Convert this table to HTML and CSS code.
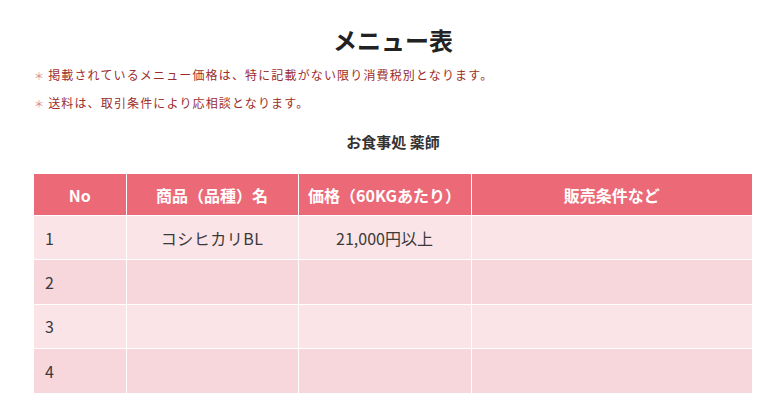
FILE: index.html
```html
<!DOCTYPE html>
<html lang="ja">
<head>
<meta charset="utf-8">
<link rel="stylesheet" href="styles.css">
</head>
<body>
<div class="wrap">
  <h1 class="title">メニュー表</h1>
  <p class="note"><span class="mark">＊</span>掲載されているメニュー価格は、特に記載がない限り消費税別となります。</p>
  <p class="note"><span class="mark">＊</span>送料は、取引条件により応相談となります。</p>
  <h2 class="shop">お食事処 薬師</h2>
  <table class="menu">
    <colgroup>
      <col class="c1"><col class="c2"><col class="c3"><col class="c4">
    </colgroup>
    <thead>
      <tr><th>No</th><th>商品（品種）名</th><th>価格（60KGあたり）</th><th>販売条件など</th></tr>
    </thead>
    <tbody>
      <tr><td class="no">1</td><td class="wide">コシヒカリBL</td><td>21,000円以上</td><td></td></tr>
      <tr><td class="no">2</td><td></td><td></td><td></td></tr>
      <tr><td class="no">3</td><td></td><td></td><td></td></tr>
      <tr><td class="no">4</td><td></td><td></td><td></td></tr>
    </tbody>
  </table>
</div>
</body>
</html>
```
FILE: styles.css
```css
html, body {
  margin: 0;
  padding: 0;
  background: #fff;
}
body {
  font-family: "Noto Sans CJK JP", "Noto Sans", sans-serif;
  color: #333;
}
.wrap {
  width: 718px;
  margin: 0 0 0 34px;
  padding-top: 22px;
}
.title {
  margin: 0;
  text-align: center;
  font-size: 24px;
  font-weight: 700;
  line-height: 36px;
  color: #222;
}
.note {
  margin: 0;
  font-size: 12px;
  line-height: 27px;
  color: #9b2d2d;
  letter-spacing: 1.15px;
}
.note:first-of-type {
  margin-top: 3px;
}
.mark {
  color: #d58a8a;
  font-size: 10px;
  margin-right: 3px;
}
.shop {
  margin: 13px 0 0;
  text-align: center;
  font-size: 15px;
  font-weight: 700;
  line-height: 24px;
  color: #333;
}
.menu {
  margin-top: 20px;
  width: 718px;
  border-collapse: collapse;
  table-layout: fixed;
}
.c1 { width: 92px; }
.c2 { width: 172px; }
.c3 { width: 173px; }
.c4 { width: 281px; }
.menu th, .menu td {
  border: 1px solid #fff;
  font-size: 16px;
  text-align: center;
  padding: 0 8px;
}
.menu tr > :first-child { border-left: none; }
.menu tr > :last-child { border-right: none; }
.menu thead tr > * { border-top: none; }
.menu tbody tr:last-child > * { border-bottom: none; }
.menu th {
  background: #ec6a78;
  color: #fff;
  font-weight: 700;
  height: 41px;
}
.menu td {
  height: 43.4px;
  color: #3a3a3a;
}
.menu td.wide {
  letter-spacing: 0.5px;
}
.menu tbody tr:nth-child(odd) td { background: #fae4e7; }
.menu tbody tr:nth-child(even) td { background: #f8d7dc; }
.menu td.no {
  text-align: left;
  padding-left: 11px;
}
```
